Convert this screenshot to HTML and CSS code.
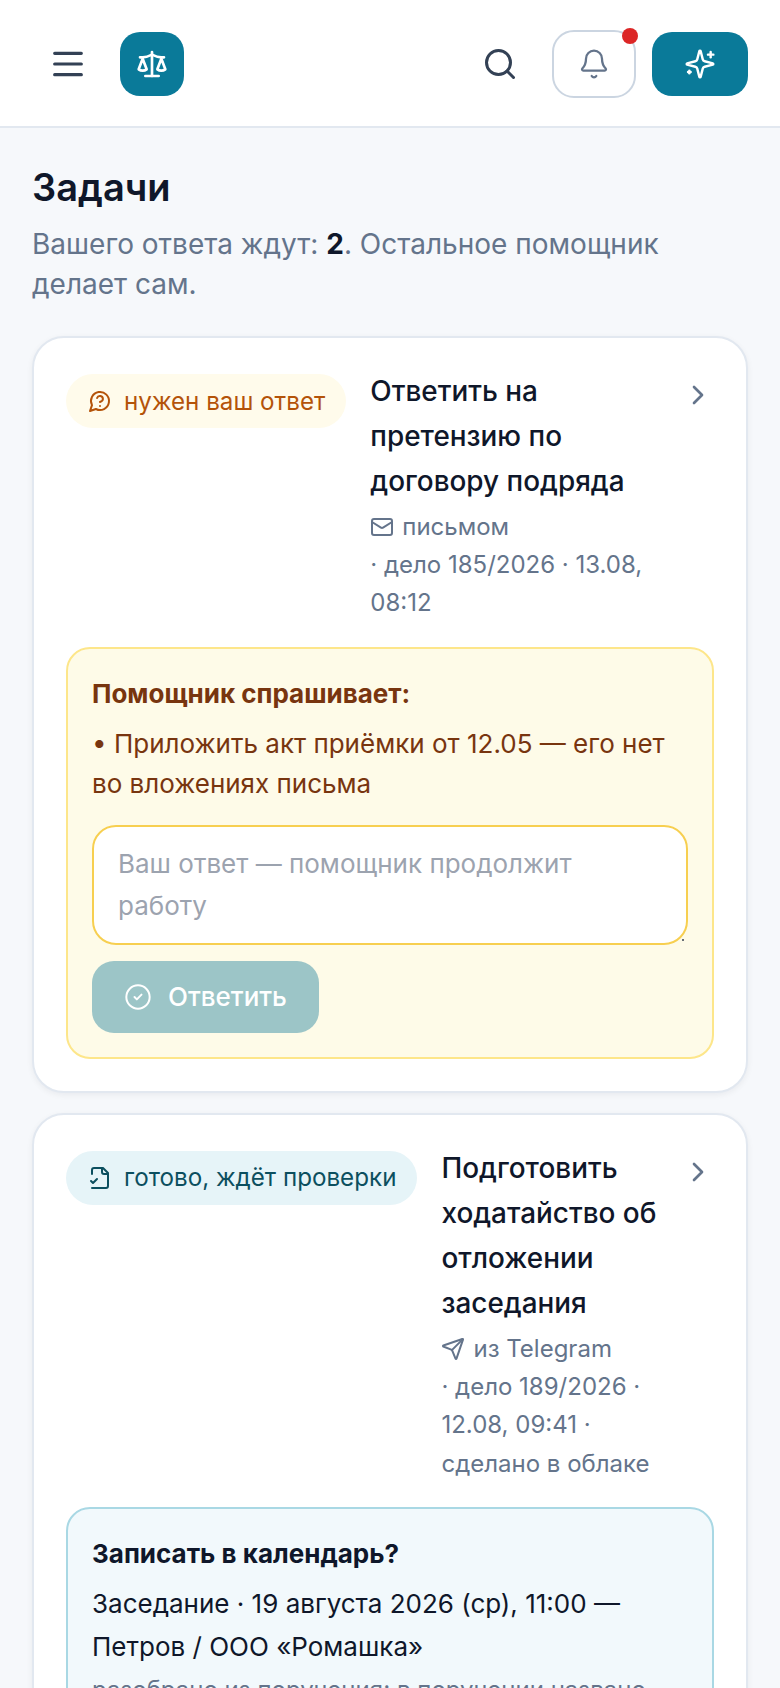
FILE: index.html
```html
<!DOCTYPE html>
<html lang="ru">
<head>
    <meta charset="UTF-8">
    <meta name="viewport" content="width=device-width, initial-scale=1.0">
    <title>Задачи</title>
    <link rel="stylesheet" href="styles.css">
</head>
<body>
    <header class="topbar">
        <button class="icon-btn">
            <svg class="ico ico-menu" viewBox="0 0 24 24"><path d="M4 5.6h16M4 12h16M4 18.4h16"/></svg>
        </button>
        <div class="logo">
            <svg class="ico ico-scale" viewBox="0 0 24 24"><path d="m16 16 3-8 3 8c-.87.65-1.92 1-3 1s-2.13-.35-3-1Z"/><path d="m2 16 3-8 3 8c-.87.65-1.92 1-3 1s-2.13-.35-3-1Z"/><path d="M7 21h10"/><path d="M12 3v18"/><path d="M3 7h2c2 0 5-1 7-2 2 1 5 2 7 2h2"/></svg>
        </div>
        <div class="topbar-right">
            <button class="icon-btn">
                <svg class="ico ico-search" viewBox="0 0 24 24"><circle cx="11" cy="11" r="8"/><path d="m21 21-4.3-4.3"/></svg>
            </button>
            <button class="bell-btn">
                <svg class="ico ico-bell" viewBox="0 0 24 24"><path d="M10.268 21a2 2 0 0 0 3.464 0"/><path d="M3.262 15.326A1 1 0 0 0 4 17h16a1 1 0 0 0 .74-1.673C19.41 13.956 18 12.499 18 8A6 6 0 0 0 6 8c0 4.499-1.411 5.956-2.738 7.326"/></svg>
                <span class="bell-dot"></span>
            </button>
            <button class="ai-btn">
                <svg class="ico ico-sparkles" viewBox="0 0 24 24"><path d="M9.937 15.5A2 2 0 0 0 8.5 14.063l-6.135-1.582a.5.5 0 0 1 0-.962L8.5 9.936A2 2 0 0 0 9.937 8.5l1.582-6.135a.5.5 0 0 1 .963 0L14.063 8.5A2 2 0 0 0 15.5 9.937l6.135 1.581a.5.5 0 0 1 0 .964L15.5 14.063a2 2 0 0 0-1.437 1.437l-1.582 6.135a.5.5 0 0 1-.963 0z"/><path d="M20 3v4"/><path d="M22 5h-4"/><path d="M4 17v2"/><path d="M5 18H3"/></svg>
            </button>
        </div>
    </header>

    <main class="content">
        <h1>Задачи</h1>
        <p class="lead">Вашего ответа ждут: <b>2</b>. Остальное помощник делает сам.</p>

        <article class="card">
            <div class="card-head">
                <span class="badge badge-wait">
                    <svg class="ico ico-badge" viewBox="0 0 24 24"><path d="M7.9 20A9 9 0 1 0 4 16.1L2 22Z"/><path d="M9.09 9a3 3 0 0 1 5.83 1c0 2-3 3-3 3"/><path d="M12 17h.01"/></svg>
                    нужен ваш ответ
                </span>
                <div class="card-info">
                    <div class="card-title">Ответить на претензию по договору подряда</div>
                    <div class="card-source">
                        <svg class="ico ico-meta" viewBox="0 0 24 24"><rect x="2" y="4" width="20" height="16" rx="2"/><path d="m22 7-8.97 5.7a1.94 1.94 0 0 1-2.06 0L2 7"/></svg>
                        письмом
                    </div>
                    <div class="card-meta">· дело 185/2026 · 13.08, 08:12</div>
                </div>
                <svg class="ico ico-chevron" viewBox="0 0 24 24"><path d="m9 18 6-6-6-6"/></svg>
            </div>

            <div class="ask-box">
                <div class="ask-title">Помощник спрашивает:</div>
                <div class="ask-item">• Приложить акт приёмки от 12.05 — его нет во вложениях письма</div>
                <div class="ask-field">
                    <textarea class="ask-input" rows="2" placeholder="Ваш ответ — помощник продолжит работу"></textarea>
                </div>
                <button class="reply-btn">
                    <svg class="ico ico-check" viewBox="0 0 24 24"><circle cx="12" cy="12" r="10"/><path d="m9 12 2 2 4-4"/></svg>
                    Ответить
                </button>
            </div>
        </article>

        <article class="card">
            <div class="card-head">
                <span class="badge badge-done">
                    <svg class="ico ico-badge" viewBox="0 0 24 24"><path d="M4 22h14a2 2 0 0 0 2-2V7l-5-5H6a2 2 0 0 0-2 2v4"/><path d="M14 2v4a2 2 0 0 0 2 2h4"/><path d="m3 15 2 2 4-4"/></svg>
                    готово, ждёт проверки
                </span>
                <div class="card-info">
                    <div class="card-title">Подготовить ходатайство об отложении заседания</div>
                    <div class="card-source">
                        <svg class="ico ico-meta" viewBox="0 0 24 24"><path d="M14.536 21.686a.5.5 0 0 0 .937-.024l6.5-19a.496.496 0 0 0-.635-.635l-19 6.5a.5.5 0 0 0-.024.937l7.93 3.18a2 2 0 0 1 1.112 1.11z"/><path d="m21.854 2.147-10.94 10.939"/></svg>
                        из Telegram
                    </div>
                    <div class="card-meta">· дело 189/2026 · 12.08, 09:41 · сделано в облаке</div>
                </div>
                <svg class="ico ico-chevron" viewBox="0 0 24 24"><path d="m9 18 6-6-6-6"/></svg>
            </div>

            <div class="cal-box">
                <div class="cal-title">Записать в календарь?</div>
                <div class="cal-event">Заседание · 19 августа 2026 (ср), 11:00 — Петров / ООО «Ромашка»</div>
                <div class="cal-note">разобрано из поручения; в поручении названо</div>
            </div>
        </article>
    </main>
</body>
</html>
```

FILE: styles.css
```css
* {
    box-sizing: border-box;
}
html, body {
    height: 1688px;
    overflow: hidden;
}
body {
    margin: 0;
    background-color: #f6f8fb;
    color: #0f172a;
    font-family: 'Inter', 'Noto Sans', sans-serif;
}
button {
    font-family: inherit;
    border: none;
    padding: 0;
    background: none;
}
.ico {
    display: block;
    flex: none;
    fill: none;
    stroke: currentColor;
    stroke-width: 2;
    stroke-linecap: round;
    stroke-linejoin: round;
}

/* шапка */
.topbar {
    display: flex;
    align-items: center;
    gap: 16px;
    height: 128px;
    padding: 2px 32px 0;
    background-color: #ffffff;
    border-bottom: 2px solid #e2e8f0;
}
.topbar-right {
    display: flex;
    align-items: center;
    gap: 16px;
    margin-left: auto;
}
.icon-btn {
    display: flex;
    align-items: center;
    justify-content: center;
    width: 72px;
    height: 64px;
    color: #334155;
}
.ico-menu {
    width: 40px;
    height: 40px;
    stroke-width: 1.9;
}
.ico-search {
    width: 36px;
    height: 36px;
}
.logo {
    display: flex;
    align-items: center;
    justify-content: center;
    width: 64px;
    height: 64px;
    border-radius: 20px;
    background-color: #0a7a99;
    color: #ffffff;
}
.ico-scale {
    width: 32px;
    height: 32px;
}
.bell-btn {
    position: relative;
    display: flex;
    align-items: center;
    justify-content: center;
    width: 84px;
    height: 68px;
    border: 2px solid #cbd5e1;
    border-radius: 22px;
    background-color: #ffffff;
    color: #64748b;
}
.ico-bell {
    width: 32px;
    height: 32px;
    stroke-width: 1.7;
}
.bell-dot {
    position: absolute;
    top: -4px;
    right: -4px;
    width: 16px;
    height: 16px;
    border-radius: 50%;
    background-color: #dc2626;
}
.ai-btn {
    display: flex;
    align-items: center;
    justify-content: center;
    width: 96px;
    height: 64px;
    border-radius: 20px;
    background-color: #0a7a99;
    color: #ffffff;
}
.ico-sparkles {
    width: 32px;
    height: 32px;
    stroke-width: 1.8;
}

/* контент */
.content {
    padding: 36px 32px 0;
}
h1 {
    margin: 0;
    font-size: 38px;
    line-height: 46px;
    font-weight: 600;
}
.lead {
    margin: 14px 0 32px;
    font-size: 28px;
    line-height: 40px;
    color: #64748b;
}
.lead b {
    color: #0f172a;
    font-weight: 700;
}

.card {
    padding: 31px 32px 32px;
    margin-bottom: 20px;
    background-color: #ffffff;
    border: 2px solid #e2e8f0;
    border-radius: 32px;
    box-shadow: 0 2px 6px rgba(15, 23, 42, 0.06);
}
.card-head {
    display: flex;
    align-items: flex-start;
    gap: 24px;
}
.badge {
    display: inline-flex;
    align-items: center;
    gap: 12px;
    flex: none;
    height: 54px;
    margin-top: 5px;
    padding: 0 21px 0 22px;
    border-radius: 27px;
    font-size: 24.2px;
    white-space: nowrap;
}
.badge-wait {
    background-color: #fffbeb;
    color: #b45309;
}
.badge-done {
    background-color: #e6f4f8;
    color: #0c4f5f;
}
.ico-badge {
    width: 24px;
    height: 24px;
}
.card-info {
    flex: 1;
    min-width: 0;
}
.card-title {
    font-size: 27.9px;
    line-height: 45px;
    font-weight: 500;
}
.card-source {
    display: flex;
    align-items: center;
    gap: 8px;
    margin-top: 4px;
    font-size: 24px;
    line-height: 38px;
    color: #64748b;
}
.card-meta {
    font-size: 24px;
    line-height: 38.4px;
    color: #64748b;
}
.ico-meta {
    width: 24px;
    height: 24px;
}
.ico-chevron {
    width: 32px;
    height: 32px;
    margin-top: 10px;
    color: #64748b;
}

/* вопрос помощника */
.ask-box {
    margin-top: 24px;
    padding: 24px;
    background-color: #fefbe8;
    border: 2px solid #fde68a;
    border-radius: 24px;
}
.ask-title {
    font-size: 26px;
    line-height: 42px;
    font-weight: 700;
    color: #78350f;
}
.ask-item {
    margin-top: 9px;
    font-size: 26px;
    line-height: 40px;
    color: #78350f;
}
.ask-field {
    position: relative;
    margin-top: 21px;
}
/* точка от ручки resize в углу поля */
.ask-field::after {
    content: "";
    position: absolute;
    right: 4px;
    bottom: 4px;
    width: 2px;
    height: 2px;
    border-radius: 50%;
    background-color: #374151;
}
.ask-input {
    display: block;
    width: 100%;
    height: 120px;
    padding: 16px 24px;
    border: 2px solid #f7cf50;
    border-radius: 24px;
    background-color: #ffffff;
    font-family: inherit;
    font-size: 26px;
    line-height: 42px;
    color: #0f172a;
    outline: none;
    resize: none;
}
.ask-input::placeholder {
    color: #9ca3af;
}
.reply-btn {
    display: flex;
    align-items: center;
    gap: 16px;
    height: 72px;
    margin-top: 16px;
    padding: 0 32px;
    border-radius: 22px;
    background-color: #9cc5c7;
    color: #ffffff;
    font-size: 26px;
    font-weight: 500;
}
.ico-check {
    width: 28px;
    height: 28px;
    stroke-width: 1.7;
}

/* календарь */
.cal-box {
    margin-top: 24px;
    padding: 24px;
    background-color: #f2f9fc;
    border: 2px solid #a9d8e4;
    border-radius: 24px;
}
.cal-title {
    font-size: 26px;
    line-height: 42px;
    font-weight: 700;
}
.cal-event {
    margin-top: 7px;
    font-size: 26px;
    line-height: 43px;
}
.cal-note {
    margin-top: 4px;
    font-size: 24px;
    line-height: 36px;
    color: #64748b;
}
```
